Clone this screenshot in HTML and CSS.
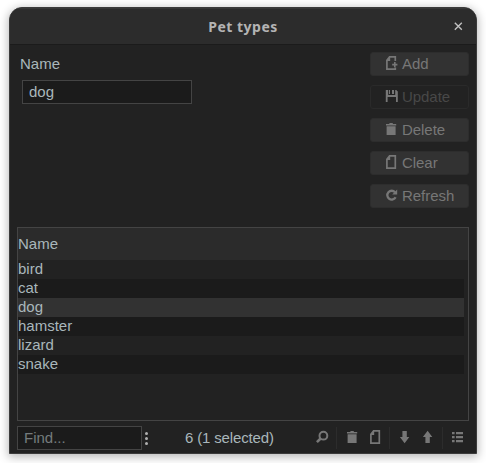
FILE: index.html
```html
<!DOCTYPE html>
<html lang="en">
<head>
<meta charset="utf-8">
<title>Pet types</title>
<link rel="stylesheet" href="styles.css">
</head>
<body>
<svg class="defs" width="0" height="0">
  <symbol id="page" viewBox="0 0 14 16"><path d="M4.6 .9H10.3V13.1H1.9V4.4z" fill="none" stroke="currentColor" stroke-width="1.7"/><path d="M1.2 5h4V.5z" fill="currentColor"/></symbol>
  <symbol id="trash" viewBox="0 0 14 16"><path d="M1 2h3.4V1h3.4v1H11.2v1.6H1zM1.6 4.2h9V13h-9z" fill="currentColor"/></symbol>
</svg>
<main class="window">
  <header class="titlebar">
    <h1>Pet types</h1>
    <svg class="close" width="9" height="9" viewBox="0 0 9 9"><path d="M.8 .8l7 7M7.8 .8l-7 7" stroke="currentColor" stroke-width="1.4"/></svg>
  </header>
  <section class="editor">
    <div class="form">
      <label for="name">Name</label>
      <input id="name" type="text" value="dog">
    </div>
    <div class="actions">
      <button><svg width="14" height="16" viewBox="0 0 14 16"><path d="M10.3 5V.9H4.6L1.9 4.4v8.7h8.4v-1.5" fill="none" stroke="currentColor" stroke-width="1.7"/><path d="M1.2 5h4V.5z" fill="currentColor"/><path d="M7.2 8.6h5.2M9.8 6v5.2" stroke="currentColor" stroke-width="1.6"/></svg>Add</button>
      <button class="disabled"><svg width="14" height="16" viewBox="0 0 14 16"><path d="M.8 1h2.4v5h7V1h1l1.6 1.4V13h-1.8V8H2.6v5H.8zM7 1h2v4H7zM4 1h1v4H4z" fill="currentColor"/></svg>Update</button>
      <button><svg width="14" height="16"><use href="#trash"/></svg>Delete</button>
      <button><svg width="14" height="16"><use href="#page"/></svg>Clear</button>
      <button><svg width="14" height="16" viewBox="0 0 14 16"><path d="M10 4.2A4.4 4.4 0 1 0 10.6 9.2" fill="none" stroke="currentColor" stroke-width="2.3"/><path d="M12.2 1.6v4.8H7.2z" fill="currentColor"/></svg>Refresh</button>
    </div>
  </section>
  <section class="table">
    <div class="head">Name</div>
    <div class="rows">
      <div>bird</div>
      <div>cat</div>
      <div class="selected">dog</div>
      <div>hamster</div>
      <div>lizard</div>
      <div>snake</div>
    </div>
  </section>
  <footer class="toolbar">
    <input class="find" type="text" placeholder="Find...">
    <svg class="more" width="3" height="14" viewBox="0 0 3 14"><g fill="currentColor"><circle cx="1.5" cy="2.5" r="1.5"/><circle cx="1.5" cy="7.5" r="1.5"/><circle cx="1.5" cy="12.5" r="1.5"/></g></svg>
    <span class="status">6 (1 selected)</span>
    <div class="tools">
      <span class="group"><svg width="14" height="16" viewBox="0 0 14 16"><circle cx="7.4" cy="5.7" r="3.9" fill="none" stroke="currentColor" stroke-width="2"/><path d="M4.6 8.5L.9 12.2" stroke="currentColor" stroke-width="2.6"/></svg></span>
      <span class="group"><svg width="14" height="16"><use href="#trash"/></svg><svg width="14" height="16"><use href="#page"/></svg></span>
      <span class="group"><svg width="14" height="16" viewBox="0 0 14 16"><path d="M3.4 1h4.4v6h2.5L5.6 13.3.9 7h2.5z" fill="currentColor"/></svg><svg width="14" height="16" viewBox="0 0 14 16"><path d="M3.4 13h4.4V7h2.5L5.6.8.9 7h2.5z" fill="currentColor"/></svg></span>
      <span class="group"><svg width="14" height="16" viewBox="0 0 14 16"><path d="M0 2h2.6v2.2H0zM4 2h7v2.2H4zM0 6h2.6v2.2H0zM4 6h7v2.2H4zM0 10h2.6v2.2H0zM4 10h7v2.2H4z" fill="currentColor"/></svg></span>
    </div>
  </footer>
</main>
</body>
</html>
```
FILE: styles.css
```css
* { box-sizing: border-box; }
body {
  margin: 0;
  height: 463px;
  padding: 7px 9px 9px;
  overflow: hidden;
  background: #fff;
  color: #a9b7bb;
  font: 15px/19px "Liberation Sans", Arial, sans-serif;
}
.defs { position: absolute; }
svg { display: block; flex: none; }
.window {
  width: 468px;
  height: 447px;
  display: flex;
  flex-direction: column;
  overflow: hidden;
  border: 1px solid #3b3b3b;
  border-radius: 13px 13px 0 0;
  background: #222;
  box-shadow: 0 2px 10px 1px rgba(0, 0, 0, .28);
}
.titlebar {
  height: 37px;
  flex: none;
  display: grid;
  grid-template-columns: 36px 1fr 36px;
  align-items: center;
  justify-items: center;
  border-top: 1px solid #383838;
  border-bottom: 1px solid #1b1b1b;
  background: #2c2c2c;
  color: #b4b4b4;
}
.titlebar h1 {
  grid-column: 2;
  margin: 0;
  font: bold 14px/20px "Noto Sans", sans-serif;
  letter-spacing: .5px;
}
.close { color: #c0c0c0; }
.editor {
  display: flex;
  justify-content: space-between;
  padding: 7px 7px 0 10px;
  height: 182px;
}
.form { display: flex; flex-direction: column; padding-top: 2px; }
input {
  border: 1px solid #444;
  background: #1b1b1b;
  color: inherit;
  font: inherit;
  height: 24px;
  padding: 0 6px 2px;
  outline: 0;
}
#name { width: 170px; margin: 7px 0 0 2px; }
.actions { display: flex; flex-direction: column; gap: 9px; }
button {
  display: flex;
  align-items: center;
  gap: 3px;
  width: 99px;
  height: 24px;
  padding: 0 0 2px 14px;
  border: 1px solid #2d2d2d;
  border-radius: 3px;
  background: #323232;
  color: #777;
  font: inherit;
  letter-spacing: -.05px;
}
button svg { color: #777; margin-top: 2px; }
.disabled { background: #222; color: #484848; border-color: #2a2a2a; }
.table {
  width: 452px;
  height: 194px;
  margin-left: 7px;
  border: 1px solid #444;
}
.head { height: 32px; line-height: 32px; background: #2b2b2b; }
.rows { width: 446px; }
.rows div { height: 19px; line-height: 18px; }
.rows div:nth-child(even) { background: #1b1b1b; }
.rows .selected { background: #323232; }
.toolbar {
  display: flex;
  align-items: center;
  margin-top: 5px;
  padding: 0 4px 0 7px;
}
.find { width: 125px; }
.find::placeholder { color: #757b7d; opacity: 1; }
.more { margin-left: 3px; color: #b0b0b0; }
.status { margin: -2px 0 0 37px; letter-spacing: -.15px; }
.tools { display: flex; margin-left: auto; color: #777; }
.group { display: flex; gap: 9px; height: 22px; padding: 0 6px 0 9px; align-items: center; }
.group + .group { border-left: 1px solid #2c2c2c; }
```
